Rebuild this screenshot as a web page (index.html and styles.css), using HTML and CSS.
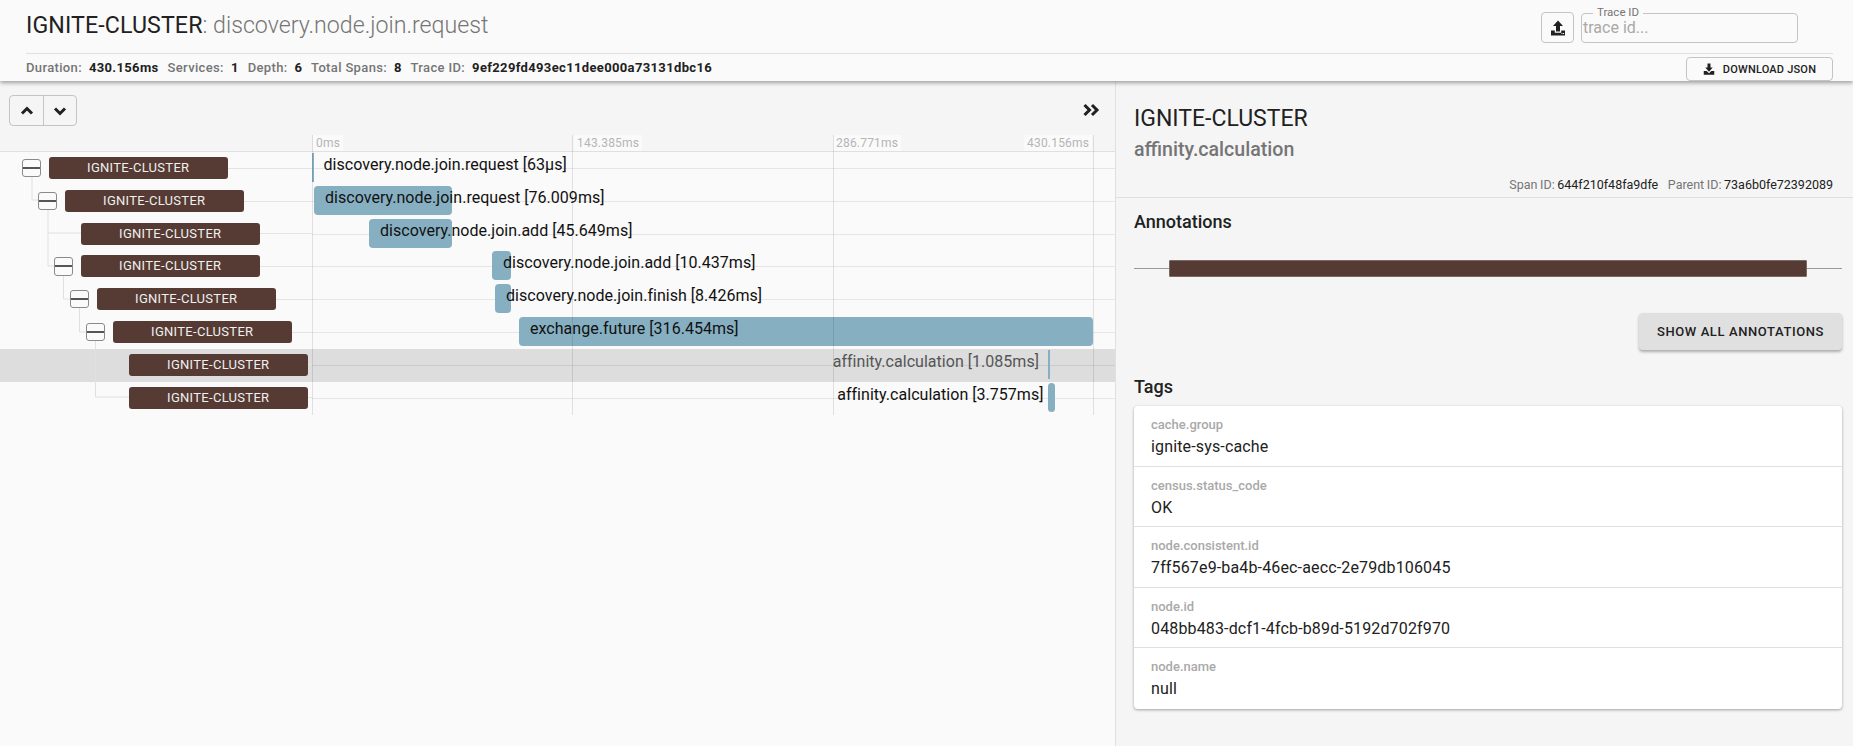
FILE: index.html
```html
<!DOCTYPE html>
<html lang="en">
<head>
  <meta charset="UTF-8">
  <title>Trace Viewer</title>
  <link rel="stylesheet" href="styles.css">
</head>
<body>

<header class="page-header">
  <div class="header-top">
    <h1 class="trace-title">IGNITE-CLUSTER<span class="trace-name">: discovery.node.join.request</span></h1>
    <div class="trace-search">
      <button class="icon-button">
        <svg width="16" height="16" viewBox="0 0 16 16"><path d="M8 0.5 13 6H10V11.5H6V6H3Z" fill="#212121"/><path d="M1 10.5H4.8V12.8H11.2V10.5H15V15.5H1Z" fill="#212121"/><rect x="11.5" y="13" width="1" height="1" fill="#fafafa"/><rect x="13" y="13" width="1" height="1" fill="#fafafa"/></svg>
      </button>
      <div class="trace-field">
        <span class="trace-field-label">Trace ID</span>
        <span class="trace-field-placeholder">trace id...</span>
      </div>
    </div>
  </div>
  <div class="header-bottom">
    <div class="trace-stats">
      <span class="stat-key">Duration:</span><span class="stat-value">430.156ms</span>
      <span class="stat-key">Services:</span><span class="stat-value">1</span>
      <span class="stat-key">Depth:</span><span class="stat-value">6</span>
      <span class="stat-key">Total Spans:</span><span class="stat-value">8</span>
      <span class="stat-key">Trace ID:</span><span class="stat-value">9ef229fd493ec11dee000a73131dbc16</span>
    </div>
    <button class="download-button">
      <svg width="12" height="12" viewBox="0 0 16 16"><path d="M6 0.5H10V6H13L8 11.5 3 6H6Z" fill="#212121"/><path d="M1 10.5H4.8L8 13.5 11.2 10.5H15V15.5H1Z" fill="#212121"/></svg>
      DOWNLOAD JSON
    </button>
  </div>
</header>

<main class="content">
  <section class="timeline-panel">
    <div class="timeline-toolbar">
      <div class="nav-group">
        <button class="nav-button">
          <svg width="14" height="14" viewBox="0 0 14 14"><path d="M2 9.5 7 4.500 12 9.5" fill="none" stroke="#212121" stroke-width="3"/></svg>
        </button>
        <button class="nav-button">
          <svg width="14" height="14" viewBox="0 0 14 14"><path d="M2 4.500 7 9.500 12 4.500" fill="none" stroke="#212121" stroke-width="3"/></svg>
        </button>
      </div>
      <svg class="collapse-icon" width="18" height="14" viewBox="0 0 18 14"><path d="M2.5 2 7.5 7 2.5 12M10 2 15 7 10 12" fill="none" stroke="#212121" stroke-width="3"/></svg>
      <div class="tick-labels">
        <span class="tick-label tick-0">0ms</span>
        <span class="tick-label tick-1">143.385ms</span>
        <span class="tick-label tick-2">286.771ms</span>
        <span class="tick-label tick-3">430.156ms</span>
      </div>
    </div>

    <div class="span-tree">
      <!-- connectors between the expanders and the labels -->
      <svg class="tree-lines" width="312" height="263" viewBox="0 0 312 263">
        <path d="M32 25V48H38M48 58V114H54M63.500 123V147H71M79.500 155V180H87M95.500 188V245H129M48 81H81" fill="none" stroke="#e0e0e0" stroke-width="1"/>
        <path d="M227 16.500H312M243 49.500H312M259 81.500H312M259 114.500H312M275 147.500H312M291 180.500H312M307 212.500H312M307 245.500H312" fill="none" stroke="#e4e4e4" stroke-width="1"/>
      </svg>

      <div class="span-row">
        <div class="span-cell d0"><span class="expander"></span><span class="service-label">IGNITE-CLUSTER</span></div>
        <div class="span-track">
          <div class="span-bar thin" style="left:0px;width:2px"></div>
          <span class="span-text" style="left:11.5px">discovery.node.join.request [63µs]</span>
        </div>
      </div>
      <div class="span-row">
        <div class="span-cell d1"><span class="expander"></span><span class="service-label">IGNITE-CLUSTER</span></div>
        <div class="span-track">
          <div class="span-bar" style="left:2px;width:138px"></div>
          <span class="span-text" style="left:13px">discovery.node.join.request [76.009ms]</span>
        </div>
      </div>
      <div class="span-row">
        <div class="span-cell d2"><span class="expander-slot"></span><span class="service-label">IGNITE-CLUSTER</span></div>
        <div class="span-track">
          <div class="span-bar" style="left:57px;width:83px"></div>
          <span class="span-text" style="left:68px">discovery.node.join.add [45.649ms]</span>
        </div>
      </div>
      <div class="span-row">
        <div class="span-cell d2"><span class="expander"></span><span class="service-label">IGNITE-CLUSTER</span></div>
        <div class="span-track">
          <div class="span-bar" style="left:180px;width:19px"></div>
          <span class="span-text" style="left:191px">discovery.node.join.add [10.437ms]</span>
        </div>
      </div>
      <div class="span-row">
        <div class="span-cell d3"><span class="expander"></span><span class="service-label">IGNITE-CLUSTER</span></div>
        <div class="span-track">
          <div class="span-bar" style="left:183px;width:15.500px"></div>
          <span class="span-text" style="left:194px">discovery.node.join.finish [8.426ms]</span>
        </div>
      </div>
      <div class="span-row">
        <div class="span-cell d4"><span class="expander"></span><span class="service-label">IGNITE-CLUSTER</span></div>
        <div class="span-track">
          <div class="span-bar" style="left:207px;width:574px"></div>
          <span class="span-text" style="left:218px">exchange.future [316.454ms]</span>
        </div>
      </div>
      <div class="span-row selected">
        <div class="span-cell d5"><span class="expander-slot"></span><span class="service-label">IGNITE-CLUSTER</span></div>
        <div class="span-track">
          <div class="span-bar thin" style="left:736px;width:2px"></div>
          <span class="span-text" style="right:76px">affinity.calculation [1.085ms]</span>
        </div>
      </div>
      <div class="span-row">
        <div class="span-cell d5"><span class="expander-slot"></span><span class="service-label">IGNITE-CLUSTER</span></div>
        <div class="span-track">
          <div class="span-bar" style="left:736px;width:7px"></div>
          <span class="span-text" style="right:71.5px">affinity.calculation [3.757ms]</span>
        </div>
      </div>

      <div class="grid-line grid-0"></div>
      <div class="grid-line grid-1"></div>
      <div class="grid-line grid-2"></div>
      <div class="grid-line grid-3"></div>
    </div>
  </section>

  <aside class="detail-panel">
    <div class="detail-head">
      <h2 class="detail-service">IGNITE-CLUSTER</h2>
      <div class="detail-span">affinity.calculation</div>
      <div class="detail-ids">
        <span>Span ID:</span> <span class="detail-id">644f210f48fa9dfe</span>
        <span class="parent-key">Parent ID:</span> <span class="detail-id">73a6b0fe72392089</span>
      </div>
    </div>
    <div class="detail-body">
      <h3 class="section-title">Annotations</h3>
      <div class="annotation-track"><div class="annotation-bar"></div></div>
      <div class="annotation-actions"><button class="show-button">SHOW ALL ANNOTATIONS</button></div>
      <h3 class="section-title tags-title">Tags</h3>
      <ul class="tag-list">
        <li class="tag-item"><div class="tag-key">cache.group</div><div class="tag-value">ignite-sys-cache</div></li>
        <li class="tag-item"><div class="tag-key">census.status_code</div><div class="tag-value">OK</div></li>
        <li class="tag-item"><div class="tag-key">node.consistent.id</div><div class="tag-value">7ff567e9-ba4b-46ec-aecc-2e79db106045</div></li>
        <li class="tag-item"><div class="tag-key">node.id</div><div class="tag-value">048bb483-dcf1-4fcb-b89d-5192d702f970</div></li>
        <li class="tag-item"><div class="tag-key">node.name</div><div class="tag-value">null</div></li>
      </ul>
    </div>
  </aside>
</main>

</body>
</html>
```

FILE: styles.css
```css
* {
  box-sizing: border-box;
}

body {
  margin: 0;
  height: 746px;
  overflow: hidden;
  font-family: Roboto, "Liberation Sans", sans-serif;
  background: #fafafa;
  color: #212121;
  display: flex;
  flex-direction: column;
}

button {
  font-family: inherit;
  cursor: pointer;
}

/* header */

.page-header {
  height: 81px;
  background: #fafafa;
  padding: 0 20px 0 26px;
  box-shadow: 0 2px 4px rgba(0,0,0,0.35);
  position: relative;
  z-index: 5;
  flex-shrink: 0;
}

.header-top {
  height: 54px;
  border-bottom: 1px solid #e0e0e0;
  display: flex;
  justify-content: space-between;
}

.trace-title {
  margin: 9px 0 0;
  font-size: 23.2px;
  line-height: 32px;
  font-weight: 400;
  letter-spacing: 0.1px;
  color: #212121;
}

.trace-name {
  color: #757575;
  font-weight: 300;
  letter-spacing: 0;
}

.trace-search {
  display: flex;
  margin: 12px 35px 0 0;
  gap: 7px;
}

.icon-button {
  width: 33px;
  height: 31px;
  padding: 0;
  background: #fafafa;
  border: 1px solid #c4c4c4;
  border-radius: 4px;
  display: flex;
  align-items: center;
  justify-content: center;
}

.trace-field {
  width: 217px;
  height: 30px;
  margin-top: 1px;
  border: 1px solid #c4c4c4;
  border-radius: 4px;
  position: relative;
  padding-left: 1px;
  font-size: 16px;
  line-height: 28px;
}

.trace-field-label {
  position: absolute;
  left: 11px;
  top: -9px;
  padding: 0 4px;
  background: #fafafa;
  font-size: 11.5px;
  line-height: 14px;
  color: #757575;
}

.trace-field-placeholder {
  color: #a9a9a9;
}

.header-bottom {
  height: 27px;
  display: flex;
  justify-content: space-between;
}

.trace-stats {
  margin-top: 6px;
  font-size: 13px;
  line-height: 16px;
  font-weight: 500;
  letter-spacing: 0.35px;
  white-space: nowrap;
}

.stat-key {
  color: #757575;
  margin-right: 7px;
}

.stat-value {
  font-weight: 700;
  margin-right: 5.4px;
}

.download-button {
  width: 147px;
  height: 24px;
  margin-top: 3px;
  padding: 0;
  background: #fafafa;
  border: 1px solid #c4c4c4;
  border-radius: 4px;
  font-size: 11px;
  font-weight: 500;
  letter-spacing: 0.2px;
  color: #212121;
  display: flex;
  align-items: center;
  justify-content: center;
  gap: 8px;
}

/* layout */

.content {
  flex: 1;
  display: flex;
  min-height: 0;
}

.timeline-panel {
  width: 1115px;
  flex-shrink: 0;
  background: #fafafa;
}

/* toolbar and time ticks */

.timeline-toolbar {
  height: 71px;
  background: #f5f5f5;
  border-bottom: 1px solid #e0e0e0;
  position: relative;
}

.nav-group {
  position: absolute;
  left: 9px;
  top: 14px;
  display: flex;
  border: 1px solid #c4c4c4;
  border-radius: 4px;
}

.nav-button {
  width: 33px;
  height: 29px;
  padding: 0;
  background: transparent;
  border: none;
  display: flex;
  align-items: center;
  justify-content: center;
}

.nav-button + .nav-button {
  border-left: 1px solid #c4c4c4;
}

.collapse-icon {
  position: absolute;
  left: 1082px;
  top: 22px;
}

.tick-labels {
  position: absolute;
  left: 0;
  right: 0;
  top: 54px;
  height: 16px;
}

.tick-label {
  position: absolute;
  top: 0;
  padding: 0 3px;
  background: #fafafa;
  font-size: 12px;
  line-height: 16px;
  letter-spacing: 0.2px;
  color: #b5b5b5;
}

.tick-0 { left: 313px; }
.tick-1 { left: 574px; }
.tick-2 { left: 833px; }
.tick-3 { left: 1024px; }

/* span rows */

.span-tree {
  position: relative;
}

.tree-lines {
  position: absolute;
  left: 0;
  top: 0;
  z-index: 1;
}

.span-row {
  height: 32.8px;
  display: flex;
}

.span-row.selected {
  background: #ddd;
}

.span-cell {
  width: 312px;
  flex-shrink: 0;
  height: 32px;
  display: flex;
  align-items: center;
}

.d0 { padding-left: 22px; }
.d1 { padding-left: 38px; }
.d2 { padding-left: 54px; }
.d3 { padding-left: 70px; }
.d4 { padding-left: 86px; }
.d5 { padding-left: 102px; }

.expander, .expander-slot {
  width: 18.5px;
  height: 18.5px;
  margin-right: 8.5px;
  flex-shrink: 0;
  position: relative;
  z-index: 2;
}

.expander {
  border: 1px solid #8a8a8a;
  border-radius: 3px;
  background: #fafafa;
}

.expander::after {
  content: "";
  position: absolute;
  left: 0;
  right: 0;
  top: 7px;
  height: 2px;
  background: #555;
}

.service-label {
  width: 178.5px;
  height: 22px;
  background: #553b33;
  border-radius: 3px;
  color: #f0f0f0;
  font-size: 13px;
  line-height: 22px;
  letter-spacing: 0.3px;
  text-align: center;
  position: relative;
  z-index: 2;
}

.span-track {
  flex: 1;
  position: relative;
}

.span-track::before {
  content: "";
  position: absolute;
  left: 0;
  right: 0;
  top: 16px;
  height: 1px;
  background: rgba(0,0,0,0.08);
}

.span-bar {
  position: absolute;
  top: 1px;
  height: 29px;
  background: #86afc1;
  border-radius: 4px;
}

.span-bar.thin {
  border-radius: 0;
}

.span-text {
  position: absolute;
  top: 1px;
  font-size: 16px;
  line-height: 24px;
  letter-spacing: 0.03px;
  color: #111;
  white-space: nowrap;
}

.selected .span-text {
  color: #555;
}

.grid-line {
  position: absolute;
  top: -17px;
  bottom: -1px;
  width: 1px;
  background: rgba(0,0,0,0.1);
  z-index: 3;
}

.grid-0 { left: 312px; }
.grid-1 { left: 572px; }
.grid-2 { left: 833px; }
.grid-3 { left: 1093px; }

/* detail panel */

.detail-panel {
  flex: 1;
  background: #f5f5f5;
  border-left: 1px solid #e0e0e0;
}

.detail-head {
  height: 117px;
  padding: 22px 20px 0 18px;
  border-bottom: 1px solid #e0e0e0;
}

.detail-service {
  margin: 0;
  font-size: 23px;
  line-height: 32px;
  font-weight: 400;
}

.detail-span {
  margin-top: 2px;
  font-size: 19.6px;
  line-height: 26px;
  font-weight: 500;
  color: #757575;
}

.detail-ids {
  margin-top: 14px;
  font-size: 12.5px;
  line-height: 16px;
  color: #757575;
  text-align: right;
  word-spacing: -0.5px;
}

.detail-id {
  color: #212121;
}

.parent-key {
  margin-left: 7px;
}

.detail-body {
  padding: 0 11px 0 18px;
}

.section-title {
  margin: 0;
  font-size: 18px;
  line-height: 24px;
  font-weight: 500;
}

.detail-body > .section-title:first-child {
  margin-top: 12px;
}

.annotation-track {
  height: 17px;
  margin-top: 26px;
  padding: 0 35px;
  background: linear-gradient(#999, #999) center / 100% 1px no-repeat;
}

.annotation-bar {
  height: 17px;
  background: #553b33;
  border: 1px solid #7a6a64;
  border-radius: 1px;
}

.annotation-actions {
  display: flex;
  justify-content: flex-end;
  margin-top: 36px;
}

.show-button {
  width: 203px;
  height: 37px;
  padding: 0;
  background: #e0e0e0;
  border: none;
  border-radius: 4px;
  font-size: 13px;
  font-weight: 500;
  letter-spacing: 0.6px;
  color: #212121;
  box-shadow: 0 2px 3px rgba(0,0,0,0.3);
}

.tags-title {
  margin-top: 25px;
}

.tag-list {
  list-style: none;
  margin: 7px 0 0;
  padding: 0;
  background: #fff;
  border-radius: 4px;
  box-shadow: 0 1px 3px rgba(0,0,0,0.35);
}

.tag-item {
  height: 60.5px;
  padding: 11px 17px 0;
  border-bottom: 1px solid #e0e0e0;
}

.tag-item:last-child {
  border-bottom: none;
}

.tag-key {
  font-size: 13px;
  line-height: 16px;
  font-weight: 500;
  color: #a9a9a9;
}

.tag-value {
  margin-top: 2px;
  font-size: 16px;
  line-height: 24px;
  letter-spacing: 0.15px;
  color: #212121;
}
```
